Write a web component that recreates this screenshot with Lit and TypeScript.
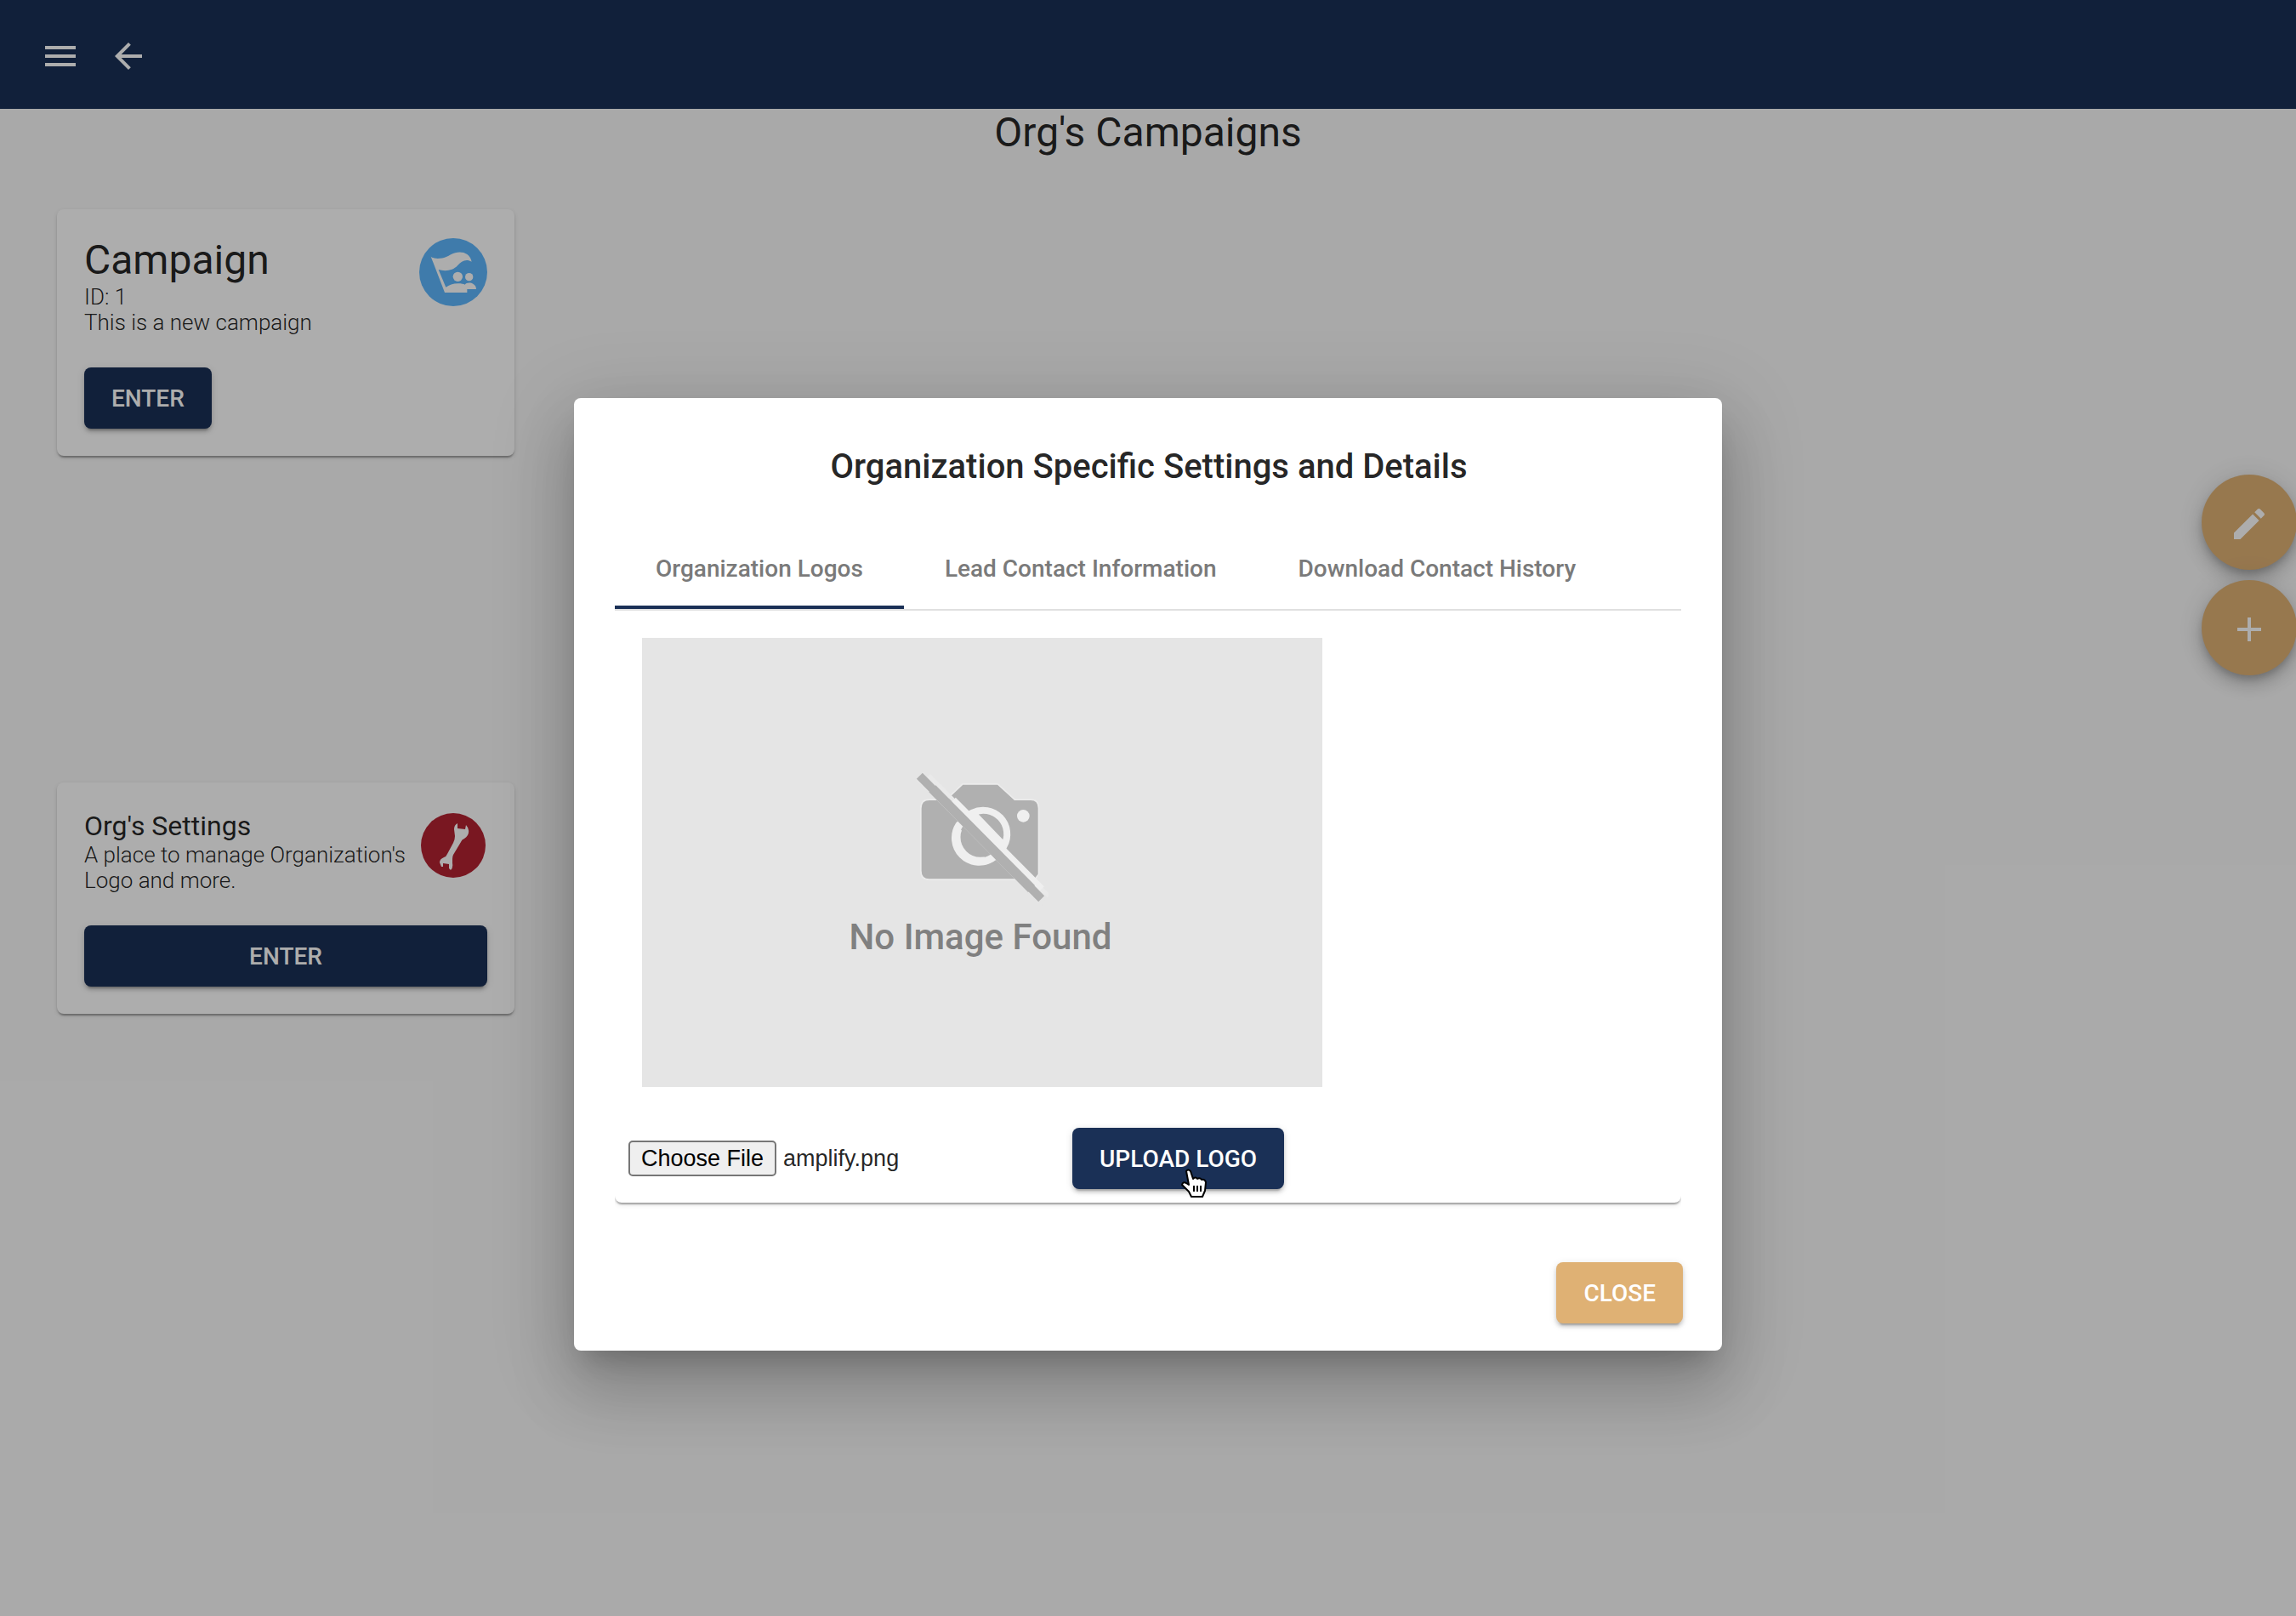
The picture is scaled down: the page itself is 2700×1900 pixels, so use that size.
import { LitElement, html, css, svg } from "lit";
import { customElement, state, query } from "lit/decorators.js";
import { classMap } from "lit/directives/class-map.js";

const icon = (path: string) => html`
  <svg class="icon" viewBox="0 0 24 24" aria-hidden="true"><path d=${path}></path></svg>
`;

const MENU = "M3 18h18v-2H3v2zm0-5h18v-2H3v2zm0-7v2h18V6H3z";
const BACK = "M20 11H7.83l5.59-5.59L12 4l-8 8 8 8 1.41-1.41L7.83 13H20v-2z";
const EDIT =
  "M3 17.25V21h3.75L17.81 9.94l-3.75-3.75L3 17.25zM20.71 7.04c.39-.39.39-1.02 0-1.41l-2.34-2.34c-.39-.39-1.02-.39-1.41 0l-1.83 1.83 3.75 3.75 1.83-1.83z";
const ADD = "M19 13h-6v6h-2v-6H5v-2h6V5h2v6h6v2z";

const flagBadge = svg`
  <circle cx="159" cy="165" r="120" fill="#5db6fd"></circle>
  <g fill="#fff">
    <path d="M80 110 Q86 116 104 117 C128 117 140 108 152 102 C176 89 216 90 224 128 C204 116 188 126 174 142 C158 160 130 163 107 156 L133 218 C144 211 158 205 176 205 C188 205 196 207 200 209 C205 200 222 201 229 206 C236 210 240 216 240 225 L208 225 L208 237 L129 237 Z"></path>
    <circle cx="175" cy="181" r="20" fill="#5db6fd"></circle>
    <circle cx="175" cy="181" r="17"></circle>
    <circle cx="215" cy="182" r="14"></circle>
  </g>
`;

const wrenchBadge = svg`
  <circle cx="38" cy="38" r="38" fill="#b32232"></circle>
  <path fill="#fff" d="M43 12 Q39 14 39 19 L40 27 Q40 31 38 35 L31 48 Q30 51 27 52 Q22 54 22 58 L24 63 L26 63 L26 59 L33 60 L33 65 L35 67 Q38 64 37 59 L37 54 Q37 51 38 49 L47 34 Q48 31 51 30 Q57 26 56 20 Q55 16 53 14 L52 19 L43 18 Z"></path>
`;

@customElement("app-root")
export class AppRoot extends LitElement {
  static styles = css`
    :host {
      display: block;
      position: relative;
      min-height: 100vh;
      overflow: hidden;
      background: #fafafa;
      color: rgba(0, 0, 0, 0.87);
      font-family: Roboto, "Liberation Sans", sans-serif;
    }
    * {
      box-sizing: border-box;
    }
    h1, h2, h3, p {
      margin: 0;
      font-weight: 400;
    }
    button {
      border: 0;
      padding: 0;
      font: inherit;
      cursor: pointer;
    }
    .icon {
      display: block;
      width: 48px;
      height: 48px;
      fill: currentColor;
    }
    .toolbar {
      display: flex;
      align-items: center;
      height: 128px;
      padding: 4px 31px 0;
      background: #1a3056;
      color: #fff;
    }
    .icon-button {
      display: grid;
      place-items: center;
      width: 80px;
      height: 80px;
      background: none;
      color: inherit;
    }
    .page {
      display: flex;
      flex-direction: column;
      padding: 0 67px;
    }
    .page-title {
      font-size: 48px;
      line-height: 56px;
      text-align: center;
    }
    .section {
      display: flex;
      align-items: flex-start;
      min-height: 336px;
      margin-top: 62px;
    }
    .section + .section {
      margin-top: 338px;
    }
    .card {
      flex: 0 1 538px;
      padding: 32px;
      border-radius: 8px;
      background: #fff;
      box-shadow: 0 4px 2px -2px rgba(0, 0, 0, 0.2), 0 2px 2px rgba(0, 0, 0, 0.14), 0 2px 6px rgba(0, 0, 0, 0.12);
    }
    .card-head {
      display: flex;
      justify-content: space-between;
      margin-bottom: 38px;
    }
    .card-title {
      font-size: 48px;
      line-height: 56px;
    }
    .card-title.small {
      font-size: 32px;
      line-height: 38px;
    }
    .card-text {
      font-size: 26px;
      line-height: 30px;
      font-weight: 300;
    }
    .badge {
      flex: none;
      width: 80px;
      height: 80px;
      margin-top: 2px;
    }
    .raised {
      height: 72px;
      padding: 2px 32px 0;
      border-radius: 8px;
      background: #1a3056;
      color: #fff;
      font-size: 28px;
      font-weight: 500;
      line-height: 40px;
      box-shadow: 0 6px 2px -4px rgba(0, 0, 0, 0.2), 0 4px 4px rgba(0, 0, 0, 0.14), 0 2px 10px rgba(0, 0, 0, 0.12);
    }
    .wide {
      width: 100%;
    }
    .accent {
      background: #dfb174;
    }
    .fabs {
      position: absolute;
      top: 558px;
      right: -1px;
      display: grid;
      gap: 12px;
    }
    .fab {
      display: grid;
      place-items: center;
      width: 112px;
      height: 112px;
      padding-top: 4px;
      border-radius: 50%;
      background: #dfb174;
      color: #fff;
      box-shadow: 0 6px 10px -2px rgba(0, 0, 0, 0.2), 0 12px 20px rgba(0, 0, 0, 0.14), 0 2px 36px rgba(0, 0, 0, 0.12);
    }
    .backdrop {
      position: absolute;
      inset: 0;
      display: flex;
      justify-content: center;
      align-items: flex-start;
      padding-top: 468px;
      background: rgba(0, 0, 0, 0.32);
    }
    .dialog {
      display: flex;
      flex-direction: column;
      width: 50%;
      padding: 48px 46px 32px 48px;
      border-radius: 8px;
      background: #fff;
      box-shadow: 0 22px 30px -14px rgba(0, 0, 0, 0.2), 0 48px 76px 6px rgba(0, 0, 0, 0.14),
        0 18px 92px 16px rgba(0, 0, 0, 0.12);
    }
    .dialog-title {
      font-size: 40px;
      line-height: 66px;
      font-weight: 500;
      text-align: center;
    }
    .content {
      margin-right: 2px;
    }
    .tabs {
      display: flex;
      margin-top: 38px;
      border-bottom: 2px solid #e0e0e0;
    }
    .tab {
      height: 96px;
      padding: 4px 48px 0;
      border-bottom: 4px solid transparent;
      background: none;
      color: #7a7a7a;
      font-size: 28px;
      font-weight: 500;
    }
    .tab.active {
      border-bottom-color: #1a3056;
    }
    .clip {
      overflow: hidden;
      padding-bottom: 16px;
    }
    .panel {
      display: flex;
      flex-direction: column;
      gap: 48px;
      padding: 32px 16px 16px;
      border-radius: 0 0 8px 8px;
      box-shadow: 0 4px 2px -2px rgba(0, 0, 0, 0.2), 0 2px 2px rgba(0, 0, 0, 0.14), 0 2px 6px rgba(0, 0, 0, 0.12);
    }
    .preview {
      display: flex;
      flex-direction: column;
      align-items: center;
      width: 800px;
      max-width: 100%;
      height: 528px;
      margin: 0 0 0 16px;
      padding: 156px 4px 0 0;
      background: #e5e5e5;
    }
    .camera {
      width: 160px;
      height: 160px;
    }
    .caption {
      margin-top: 10px;
      color: #808080;
      font-size: 42px;
      line-height: 52px;
      font-weight: 500;
    }
    .upload {
      display: flex;
      align-items: center;
      gap: 16px;
    }
    .file {
      flex: 0 1 506px;
      min-width: 0;
      font-family: "Liberation Sans", Arial, sans-serif;
      font-size: 27px;
      color: rgba(0, 0, 0, 0.87);
    }
    .file::file-selector-button {
      height: 42px;
      margin: 0 8px 0 0;
      padding: 0 13px;
      border: 2px solid #767676;
      border-radius: 5px;
      background: #efefef;
      color: #000;
      font: inherit;
    }
    .upload-button {
      position: relative;
    }
    .pointer {
      position: absolute;
      left: 126px;
      top: 47px;
      width: 34px;
      height: 36px;
      pointer-events: none;
    }
    .actions {
      display: flex;
      justify-content: flex-end;
      margin-top: 54px;
    }
  `;

  @state() private tab = 0;
  @query(".file") private fileInput!: HTMLInputElement;

  private tabs = ["Organization Logos", "Lead Contact Information", "Download Contact History"];

  firstUpdated() {
    const transfer = new DataTransfer();
    transfer.items.add(new File([""], "amplify.png", { type: "image/png" }));
    this.fileInput.files = transfer.files;
  }

  render() {
    return html`
      <header class="toolbar">
        <button class="icon-button" aria-label="Menu">${icon(MENU)}</button>
        <button class="icon-button" aria-label="Back">${icon(BACK)}</button>
      </header>

      <main class="page">
        <h1 class="page-title">Org's Campaigns</h1>
        <section class="section">
          <article class="card">
            <div class="card-head">
              <div>
                <h2 class="card-title">Campaign</h2>
                <p class="card-text">ID: 1</p>
                <p class="card-text">This is a new campaign</p>
              </div>
              <svg class="badge" viewBox="39 45 240 240" aria-hidden="true">${flagBadge}</svg>
            </div>
            <button class="raised">ENTER</button>
          </article>
        </section>
        <section class="section">
          <article class="card">
            <div class="card-head">
              <div>
                <h2 class="card-title small">Org's Settings</h2>
                <p class="card-text">A place to manage Organization's Logo and more.</p>
              </div>
              <svg class="badge" viewBox="-2 -2 80 80" aria-hidden="true">${wrenchBadge}</svg>
            </div>
            <button class="raised wide">ENTER</button>
          </article>
        </section>
      </main>

      <div class="fabs">
        <button class="fab" aria-label="Edit">${icon(EDIT)}</button>
        <button class="fab" aria-label="Add">${icon(ADD)}</button>
      </div>

      <div class="backdrop">
        <div class="dialog" role="dialog" aria-modal="true" aria-labelledby="dialog-title">
          <h2 class="dialog-title" id="dialog-title">Organization Specific Settings and Details</h2>
          <div class="content">
            <div class="tabs" role="tablist">
              ${this.tabs.map(
                (label, i) => html`
                  <button
                    class=${classMap({ tab: true, active: i === this.tab })}
                    role="tab"
                    aria-selected=${i === this.tab}
                    @click=${() => (this.tab = i)}
                  >${label}</button>
                `
              )}
            </div>
            <div class="clip">
              <div class="panel" role="tabpanel">
                <figure class="preview">
                  <svg class="camera" viewBox="340 80 480 480" aria-hidden="true">
                    <path
                      d="M400 185 H460 L518 130 H640 L700 185 H757 Q783 185 783 213 V445 L770 462 H400 Q372 462 372 434 V213 Q372 185 400 185 Z"
                      fill="#b0b0b0" stroke="#ececec" stroke-width="10" paint-order="stroke"></path>
                    <circle cx="580" cy="315" r="84" fill="none" stroke="#efefef" stroke-width="27"></circle>
                    <path d="M502 232 L638 388" stroke="#b0b0b0" stroke-width="60"></path>
                    <path
                      d="M505 272 A84 84 0 0 0 620 389"
                      fill="none" stroke="#efefef" stroke-width="27" stroke-linecap="round"></path>
                    <path d="M552 229 A84 84 0 0 1 663 345 Z" fill="#b0b0b0" stroke="#efefef" stroke-width="24"></path>
                    <circle cx="731" cy="240" r="22" fill="#efefef"></circle>
                    <path d="M700 466 L795 561 L830 480 L783 446 L783 462 Z" fill="#e5e5e5"></path>
                    <path d="M398 97 L820 522" stroke="#e9e9e9" stroke-width="14"></path>
                    <path d="M484 184 L796 497" stroke="#efefef" stroke-width="24"></path>
                    <path d="M365 99 L795 532" stroke="#ececec" stroke-width="34"></path>
                    <path d="M410 144 L760 497" stroke="#b0b0b0" stroke-width="34"></path>
                    <path d="M365 99 L795 532" stroke="#b0b0b0" stroke-width="30"></path>
                  </svg>
                  <figcaption class="caption">No Image Found</figcaption>
                </figure>
                <div class="upload">
                  <input class="file" type="file" accept="image/*" aria-label="Logo file" />
                  <button class="raised upload-button">
                    UPLOAD LOGO
                    <svg class="pointer" viewBox="0 0 34 36" aria-hidden="true">
                      <path
                        fill="#fff" stroke="#000" stroke-width="2" stroke-linejoin="round"
                        d="M8 4 Q10 1 13 4 L16 13 Q19 10 21 13 Q24 11 26 14 Q30 13 31 17 L30 27 L27 34 L14 34 L11 28 L3 20 Q4 16 8 18 L11 20 Z"></path>
                      <path fill="none" stroke="#000" stroke-width="2" d="M17 21v7M21 21v7M25 21v7"></path>
                    </svg>
                  </button>
                </div>
              </div>
            </div>
          </div>
          <div class="actions">
            <button class="raised accent">CLOSE</button>
          </div>
        </div>
      </div>
    `;
  }
}
